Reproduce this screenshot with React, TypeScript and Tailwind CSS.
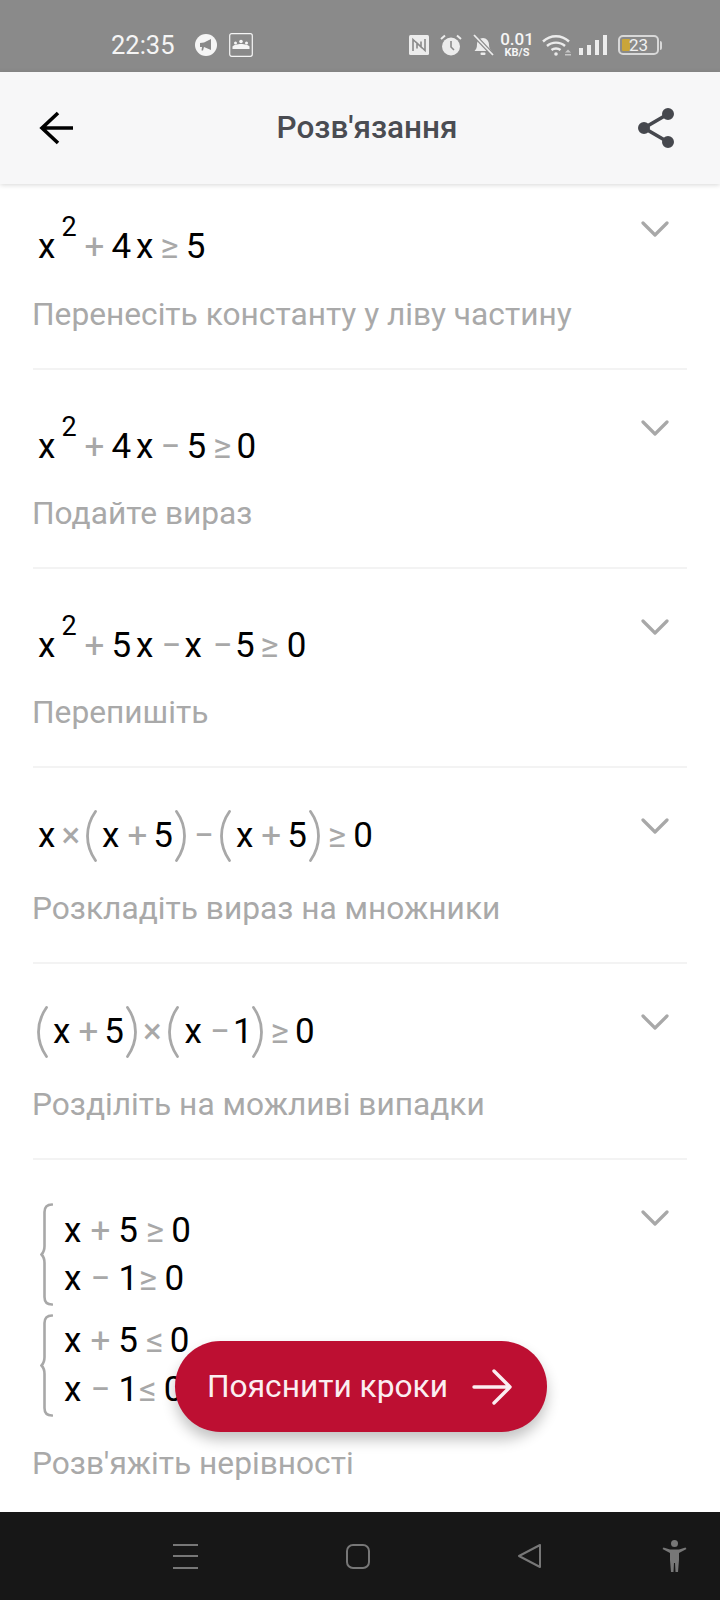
import type { ReactNode } from 'react';

function N({ children, className = '' }: { children: ReactNode; className?: string }) {
  return <span className={`text-black ${className}`}>{children}</span>;
}

function Op({ children, className = '' }: { children: ReactNode; className?: string }) {
  return <span className={`text-[#a8a8a8] ${className}`}>{children}</span>;
}

function Sup({ children }: { children: ReactNode }) {
  return <span className="ml-[6px] -translate-y-[22px] text-[27px] text-black">{children}</span>;
}

function Paren({ side, className = '' }: { side: 'l' | 'r'; className?: string }) {
  return (
    <svg viewBox="0 0 11 52" className={`-my-[6px] h-[52px] w-[11px] self-center ${className}`} fill="none" stroke="#a8a8a8" strokeWidth="2.8" strokeLinecap="round">
      <path d={side === 'l' ? 'M9.5 1.5C3.5 10 1.5 18 1.5 26s2 16 8 24.5' : 'M1.5 1.5C7.5 10 9.5 18 9.5 26s-2 16-8 24.5'} />
    </svg>
  );
}

function Brace() {
  return (
    <svg viewBox="0 0 13 103" className="ml-[7px] mr-[11px] h-[103px] w-[13px] shrink-0" fill="none" stroke="#a8a8a8" strokeWidth="2.6" strokeLinecap="round">
      <path d="M12 1.5C7 1.5 4.5 4 4.500 9v34c0 5-1.500 7-3 8.500 1.500 1.500 3 3.500 3 8.500v34c0 5 2.500 7.500 7.500 7.500" />
    </svg>
  );
}

function Chevron({ className = '' }: { className?: string }) {
  return (
    <svg viewBox="0 0 28 18" className={`h-[18px] w-[28px] shrink-0 ${className}`} fill="none" stroke="#a8a8a8" strokeWidth="3.2" strokeLinecap="round" strokeLinejoin="round">
      <path d="M2 3l12 12L26 3" />
    </svg>
  );
}

function Step({
  math,
  label,
  labelClass,
  chevronClass = 'mt-[49px] mr-[18px]',
  last,
}: {
  math: ReactNode;
  label: string;
  labelClass: string;
  chevronClass?: string;
  last?: boolean;
}) {
  return (
    <div className={`mx-[33px] flex items-start justify-between ${last ? '' : 'border-b-2 border-[#f3f3f3]'}`}>
      <div>
        {math}
        <div className={`-ml-[1px] text-[31.7px] leading-[40px] text-[#a9a9a9] ${labelClass}`}>{label}</div>
      </div>
      <Chevron className={chevronClass} />
    </div>
  );
}

function MathLine({ className = '', children }: { className?: string; children: ReactNode }) {
  return <div className={`flex items-baseline text-[35px] leading-[40px] ${className}`}>{children}</div>;
}

function StatusBar() {
  return (
    <div className="flex h-[72px] shrink-0 items-center bg-[#8a8a8a] pl-[111px] pr-[58px] pt-[18px] text-white">
      <span className="text-[25.5px] leading-[30px] text-[#f5f5f5]">22:35</span>
      <svg viewBox="0 0 22 22" className="ml-[20px] h-[22px] w-[22px]">
        <circle cx="11" cy="11" r="11" fill="#f5f5f5" />
        <path d="M5 9l4-.5 7-3.500v11l-7-3-1 3.500H6.500L7 13H5z" fill="#8a8a8a" />
      </svg>
      <svg viewBox="0 0 24 24" className="ml-[12px] h-[24px] w-[24px]" fill="none">
        <rect x=".7" y=".7" width="22.600" height="22.600" rx="2" stroke="#f5f5f5" strokeWidth="1.200" />
        <circle cx="12" cy="8.500" r="1.800" fill="#f5f5f5" />
        <circle cx="6.500" cy="10" r="1.500" fill="#f5f5f5" />
        <circle cx="17.500" cy="10" r="1.500" fill="#f5f5f5" />
        <path d="M3.500 16v-2.500c1-1.500 5-2.500 8.500-2.500s7.500 1 8.500 2.500V16z" fill="#f5f5f5" />
      </svg>
      <div className="ml-auto flex items-center">
        <svg viewBox="0 0 20 20" className="h-[20px] w-[20px]">
          <rect width="20" height="20" rx="1.500" fill="#ececec" />
          <path d="M4 16V4.500l8 7.500V6.500M16 4v11.500L8 8v5.500" fill="none" stroke="#8a8a8a" strokeWidth="1.600" />
        </svg>
        <svg viewBox="0 0 22 22" className="ml-[11px] h-[22px] w-[22px]">
          <circle cx="11" cy="12.500" r="9" fill="#ececec" />
          <path d="M11 7v6l3 3" fill="none" stroke="#8a8a8a" strokeWidth="1.600" />
          <path d="M1 5l4-3.500M21 5l-4-3.500" stroke="#ececec" strokeWidth="2" />
        </svg>
        <svg viewBox="0 0 22 22" className="ml-[10px] h-[22px] w-[22px]">
          <path d="M2.500 17c1.500-1.500 2.500-3 2.500-6.500S7.500 4 11 4s6 3 6 6.500 1 5 2.500 6.500z" fill="#ececec" />
          <rect x="8.500" y="18.500" width="5" height="2.500" rx="1" fill="#ececec" />
          <path d="M2 1l19 20" stroke="#8a8a8a" strokeWidth="4" />
          <path d="M2 1l19 20" stroke="#ececec" strokeWidth="1.800" />
        </svg>
        <div className="ml-[7px] flex w-[32px] flex-col items-center font-medium text-[#f5f5f5]">
          <span className="text-[17px] leading-[15px]">0.01</span>
          <span className="text-[11px] font-bold leading-[11px]">KB/S</span>
        </div>
        <svg viewBox="0 0 29 22" className="ml-[9px] h-[22px] w-[29px]" fill="none" stroke="#ececec" strokeWidth="2.400">
          <path d="M1 7.500c7.500-7 18.500-7 26 0M5 12c5-4.500 13-4.500 18 0M9.500 16c2.500-2 6.500-2 9 0" />
          <circle cx="14" cy="20" r="1.800" fill="#ececec" stroke="none" />
          <path d="M23 18.500h6l-3-3zM23 20h6v1.500h-6z" fill="#c8c8c8" stroke="none" />
        </svg>
        <div className="ml-[8px] flex h-[20px] items-end gap-[4px]">
          <span className="h-[7px] w-[4px] bg-[#ececec]" />
          <span className="h-[10px] w-[4px] bg-[#ececec]" />
          <span className="h-[15px] w-[4px] bg-[#ececec]" />
          <span className="h-[20px] w-[4px] bg-[#ececec]" />
        </div>
        <div className="ml-[11px] flex items-center">
          <div className="relative h-[20px] w-[41px] overflow-hidden rounded-[5px] border-2 border-[#d8d8d8]">
            <div className="absolute bottom-[2px] left-[2px] top-[2px] w-[8px] rounded-[1px] bg-[#c9a53a]" />
            <span className="absolute left-[9px] top-[-2px] text-[17px] leading-[20px] text-[#f0f0f0]">23</span>
          </div>
          <div className="ml-[1px] h-[9px] w-[2px] rounded-r bg-[#d8d8d8]" />
        </div>
      </div>
    </div>
  );
}

function AppBar() {
  return (
    <div className="relative z-10 flex h-[112px] shrink-0 items-center bg-[#f7f7f8] pl-[38px] pr-[44px] shadow-[0_1px_5px_rgba(0,0,0,0.16)]">
      <svg viewBox="0 0 36 36" className="h-[36px] w-[36px]" fill="none" stroke="#000" strokeWidth="3.600">
        <path d="M35 18H4M20 3L4 18l16 15" />
      </svg>
      <span className="ml-[22px] flex-1 text-center text-[31.5px] font-medium leading-[40px] text-[#4a4c52]">Розв'язання</span>
      <svg viewBox="0 0 38 40" className="h-[40px] w-[38px]" fill="#46484e" stroke="#46484e" strokeWidth="3.600">
        <path d="M30 6L6 20l24 14" fill="none" />
        <circle cx="30" cy="6" r="4.200" />
        <circle cx="30" cy="34" r="4.200" />
        <circle cx="6" cy="20" r="4.200" />
      </svg>
    </div>
  );
}

function NavBar() {
  return (
    <div className="flex h-[88px] shrink-0 items-center bg-[#171717] pl-[173px]">
      <div className="flex h-[25px] w-[25px] flex-col justify-between">
        <span className="h-[2px] bg-[#777]" />
        <span className="h-[2px] bg-[#777]" />
        <span className="h-[2px] bg-[#777]" />
      </div>
      <div className="ml-[148px] h-[25px] w-[24px] rounded-[7px] border-2 border-[#777]" />
      <svg viewBox="0 0 23 24" className="ml-[148px] h-[24px] w-[23px]" fill="none" stroke="#777" strokeWidth="2" strokeLinejoin="round">
        <path d="M1 12L22 1v22z" />
      </svg>
      <svg viewBox="0 0 25 32" className="ml-[121px] h-[32px] w-[25px]" fill="#777">
        <circle cx="12.500" cy="3.500" r="3.500" />
        <path d="M.5 9l1-1.500L8 9.500h9l6.500-2 1 1.500L17 13v7l-1 12h-2.500l-.5-9h-1l-.5 9H9L8 20v-7z" />
      </svg>
    </div>
  );
}

export default function App() {
  return (
    <div className="relative flex h-[1600px] w-[720px] flex-col overflow-hidden bg-white font-['Roboto',sans-serif]">
      <StatusBar />
      <AppBar />
      <div className="min-h-0 flex-1 overflow-hidden">
        <Step
          chevronClass="mt-[36px] mr-[18px]"
          labelClass="mt-[28px] mb-[33px]"
          label="Перенесіть константу у ліву частину"
          math={
            <div className="pt-[43px]">
              <MathLine className="h-[40px]">
                <N className="ml-[5px]">x</N><Sup>2</Sup>
                <Op className="ml-[8px]">+</Op><N className="ml-[7px]">4</N><N className="ml-[5px]">x</N>
                <Op className="ml-[7px]">≥</Op><N className="ml-[7px]">5</N>
              </MathLine>
            </div>
          }
        />
        <Step
          labelClass="mt-[27px] mb-[33px]"
          label="Подайте вираз"
          math={
            <div className="pt-[57px]">
              <MathLine className="h-[40px]">
                <N className="ml-[5px]">x</N><Sup>2</Sup>
                <Op className="ml-[8px]">+</Op><N className="ml-[7px]">4</N><N className="ml-[5px]">x</N>
                <Op className="ml-[7px]">−</Op><N className="ml-[6px]">5</N>
                <Op className="ml-[7px]">≥</Op><N className="ml-[5px]">0</N>
              </MathLine>
            </div>
          }
        />
        <Step
          labelClass="mt-[27px] mb-[33px]"
          label="Перепишіть"
          math={
            <div className="pt-[57px]">
              <MathLine className="h-[40px]">
                <N className="ml-[5px]">x</N><Sup>2</Sup>
                <Op className="ml-[8px]">+</Op><N className="ml-[7px]">5</N><N className="ml-[5px]">x</N>
                <Op className="ml-[8px]">−</Op><N className="ml-[3px]">x</N>
                <Op className="ml-[11px]">−</Op><N className="ml-[2px]">5</N>
                <Op className="ml-[6px]">≥</Op><N className="ml-[8px]">0</N>
              </MathLine>
            </div>
          }
        />
        <Step
          labelClass="mt-[33px] mb-[33px]"
          label="Розкладіть вираз на множники"
          math={
            <div className="pt-[48px]">
              <MathLine className="h-[40px]">
                <N className="ml-[5px]">x</N><Op className="ml-[6px]">×</Op>
                <Paren side="l" className="ml-[6px]" />
                <N className="ml-[5px]">x</N><Op className="ml-[8px]">+</Op><N className="ml-[6px]">5</N>
                <Paren side="r" className="ml-[2px]" />
                <Op className="ml-[8px]">−</Op>
                <Paren side="l" className="ml-[6px]" />
                <N className="ml-[5px]">x</N><Op className="ml-[8px]">+</Op><N className="ml-[6px]">5</N>
                <Paren side="r" className="ml-[2px]" />
                <Op className="ml-[8px]">≥</Op><N className="ml-[7px]">0</N>
              </MathLine>
            </div>
          }
        />
        <Step
          labelClass="mt-[33px] mb-[33px]"
          label="Розділіть на можливі випадки"
          math={
            <div className="pt-[48px]">
              <MathLine className="h-[40px]">
                <Paren side="l" className="ml-[4px]" />
                <N className="ml-[5px]">x</N><Op className="ml-[8px]">+</Op><N className="ml-[6px]">5</N>
                <Paren side="r" className="ml-[2px]" />
                <Op className="ml-[6px]">×</Op>
                <Paren side="l" className="ml-[6px]" />
                <N className="ml-[6px]">x</N><Op className="ml-[8px]">−</Op><N className="ml-[3px]">1</N>
                <Paren side="r" className="-ml-[1px]" />
                <Op className="ml-[8px]">≥</Op><N className="ml-[6px]">0</N>
              </MathLine>
            </div>
          }
        />
        <Step
          last
          labelClass="mt-[27px]"
          label="Розв'яжіть нерівності"
          math={
            <div className="flex flex-col gap-[8px] pt-[43px]">
              <div className="flex">
                <Brace />
                <div className="flex flex-col gap-[8px] pt-[8px]">
                  <MathLine className="h-[40px]">
                    <N>x</N><Op className="ml-[9px]">+</Op><N className="ml-[8px]">5</N>
                    <Op className="ml-[8px]">≥</Op><N className="ml-[7px]">0</N>
                  </MathLine>
                  <MathLine className="h-[40px]">
                    <N>x</N><Op className="ml-[9px]">−</Op><N className="ml-[8px]">1</N>
                    <Op className="ml-[1px]">≥</Op><N className="ml-[7px]">0</N>
                  </MathLine>
                </div>
              </div>
              <div className="flex">
                <Brace />
                <div className="flex flex-col gap-[9px] pt-[7px]">
                  <MathLine className="h-[40px]">
                    <N>x</N><Op className="ml-[9px]">+</Op><N className="ml-[8px]">5</N>
                    <Op className="ml-[8px]">≤</Op><N className="ml-[6px]">0</N>
                  </MathLine>
                  <MathLine className="h-[40px]">
                    <N>x</N><Op className="ml-[9px]">−</Op><N className="ml-[8px]">1</N>
                    <Op className="ml-[1px]">≤</Op><N className="ml-[7px]">0</N>
                  </MathLine>
                </div>
              </div>
            </div>
          }
        />
      </div>
      <NavBar />
      <button className="absolute left-[175px] top-[1341px] flex h-[91px] w-[372px] items-center rounded-full bg-[#bd0f32] pl-[32px] text-[31.7px] text-[#fbeef1] shadow-[0_8px_14px_rgba(0,0,0,0.24)]">
        <span>Пояснити кроки</span>
        <svg viewBox="0 0 40 36" className="ml-[24px] h-[36px] w-[40px]" fill="none" stroke="#fbeef1" strokeWidth="3.400" strokeLinecap="round" strokeLinejoin="round">
          <path d="M2 18h36M22 2l16 16-16 16" />
        </svg>
      </button>
    </div>
  );
}
